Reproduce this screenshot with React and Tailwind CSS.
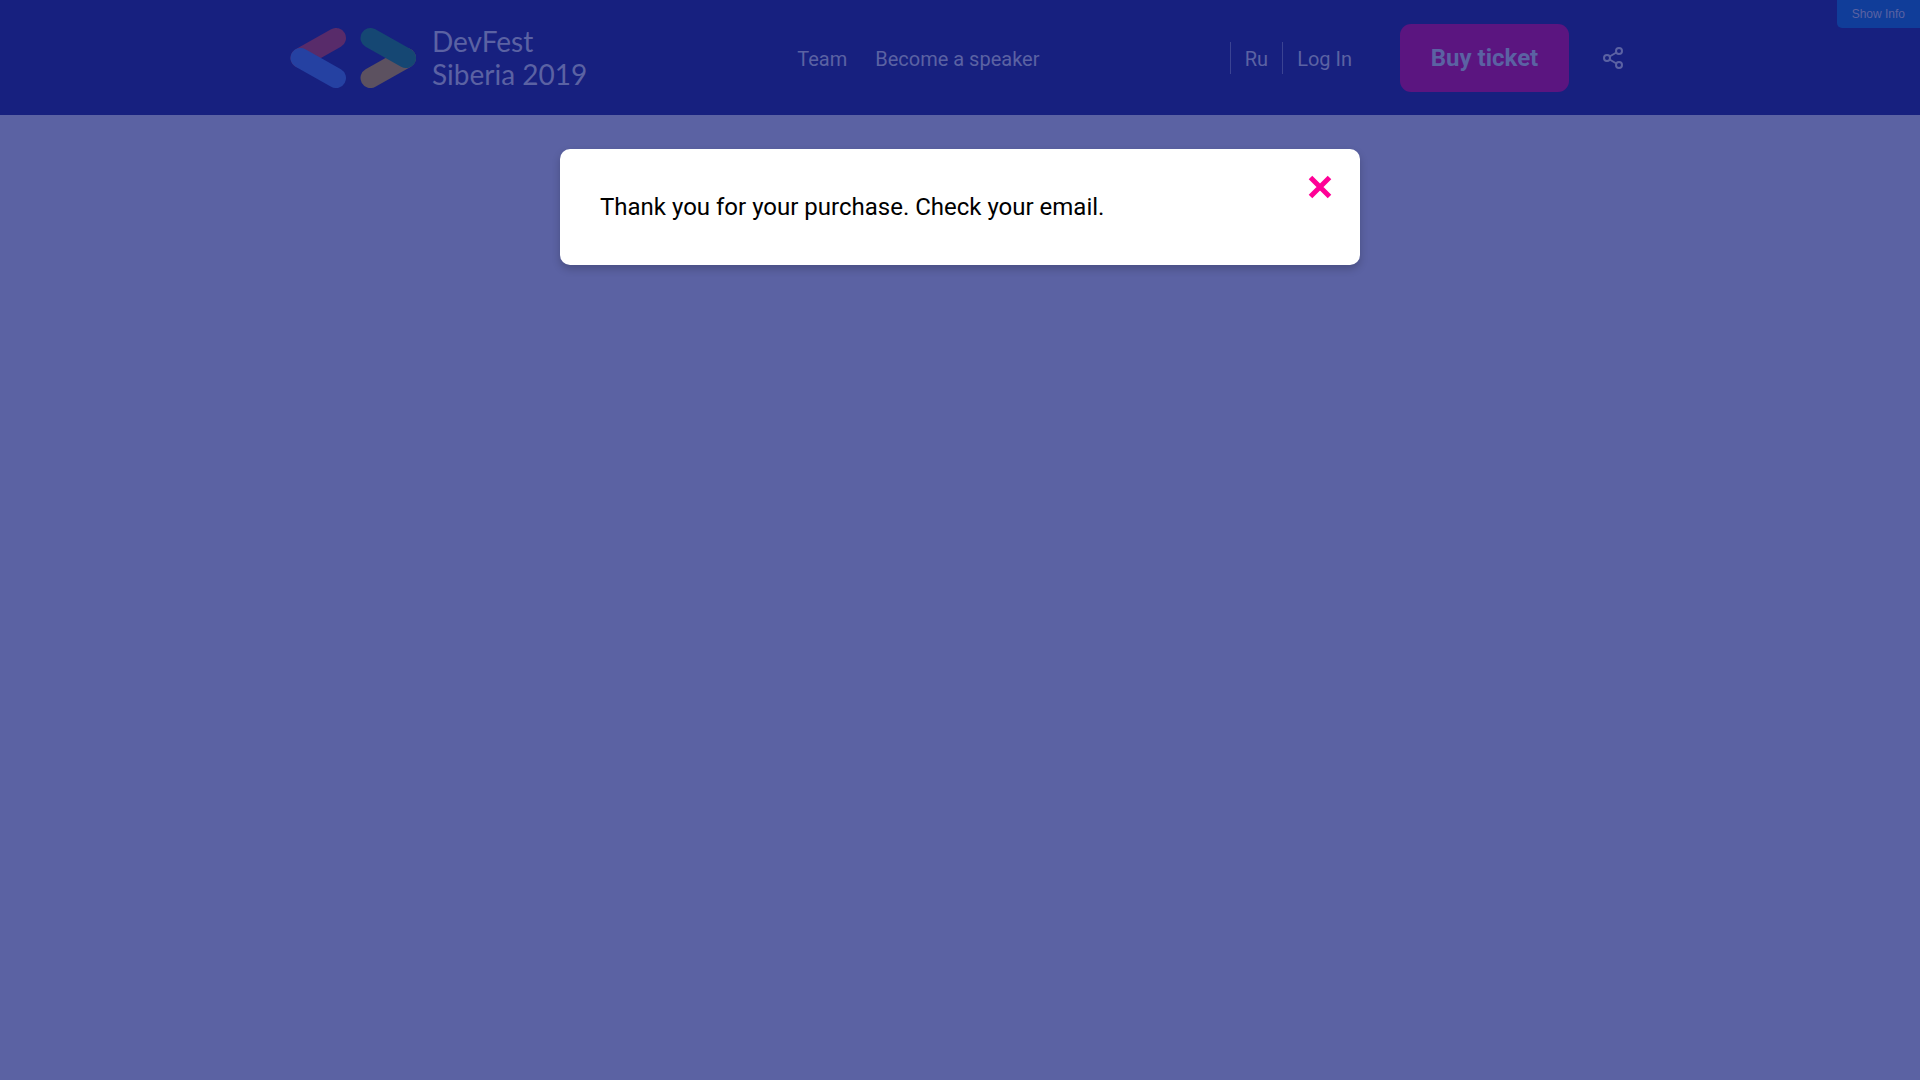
function Logo() {
  return (
    <a href="#home" className="flex items-center gap-4" aria-label="DevFest Siberia 2019">
      <svg width="126" height="60" viewBox="0 0 126 60" fill="none" strokeWidth="20" strokeLinecap="round" aria-hidden="true">
        <path d="M46 10 10.5 30" stroke="#582b6a" />
        <path d="M10.5 30 46 50" stroke="#2541a2" />
        <path d="M80.500 50 116 30" stroke="#5c5160" />
        <path d="M80.500 10 116 30" stroke="#154773" />
      </svg>
      <span className="font-['Lato',sans-serif] text-[28px] leading-[33px] whitespace-nowrap">
        DevFest
        <br />
        Siberia 2019
      </span>
    </a>
  );
}

function ShareIcon() {
  return (
    <svg width="22" height="24" viewBox="0 0 22 24" fill="none" stroke="currentColor" strokeWidth="2" aria-hidden="true">
      <circle cx="5" cy="12" r="3" />
      <circle cx="17" cy="5" r="3" />
      <circle cx="17" cy="19" r="3" />
      <path d="m7.600 10.500 6.800-4M7.600 13.500l6.800 4" />
    </svg>
  );
}

export default function App() {
  return (
    <div className="relative min-h-screen bg-[#5b62a3] font-['Roboto',sans-serif] text-[20px]">
      <header className="bg-[#17207f] text-[#5b62a3]">
        <div className="mx-auto flex h-[115px] max-w-[1340px] items-center">
          <Logo />
          <nav className="ml-[210px] flex gap-7 pt-0.5 whitespace-nowrap">
            <a href="#team">Team</a>
            <a href="#speaker">Become a speaker</a>
          </nav>
          <div className="ml-auto flex items-center">
            <div className="flex items-center whitespace-nowrap">
              <button type="button" className="border-l border-[#3b4393] px-[14px] pt-0.5">Ru</button>
              <button type="button" className="border-l border-[#3b4393] pl-[14px] pt-0.5">Log In</button>
            </div>
            <button type="button" className="ml-12 h-[68px] w-[169px] rounded-[11px] bg-[#5b1580] text-[24px] font-bold whitespace-nowrap">
              Buy ticket
            </button>
            <button type="button" aria-label="Share" className="mr-1.5 ml-[33px]">
              <ShareIcon />
            </button>
          </div>
        </div>
      </header>
      <button type="button" className="absolute top-0 right-0 h-7 rounded-bl-[5px] bg-[#103d99] px-[15px] font-['Liberation_Sans',sans-serif] text-[12px] text-[#5b62a3]">
        Show Info
      </button>
      <main className="px-4 pt-[34px]">
        <div role="dialog" aria-label="Purchase complete" className="mx-auto flex max-w-[800px] items-start justify-between rounded-[10px] bg-white pr-7 pl-10 shadow-[0_4px_8px_rgba(0,0,0,0.2)]">
          <p className="py-10 text-[24px] leading-9 text-black">Thank you for your purchase. Check your email.</p>
          <button type="button" aria-label="Close" className="mt-[26px] text-[#ff0096]">
            <svg width="24" height="24" viewBox="0 0 24 24" fill="none" stroke="currentColor" strokeWidth="5" aria-hidden="true">
              <path d="m2.500 2.500 19 19M21.500 2.500l-19 19" />
            </svg>
          </button>
        </div>
      </main>
    </div>
  );
}
